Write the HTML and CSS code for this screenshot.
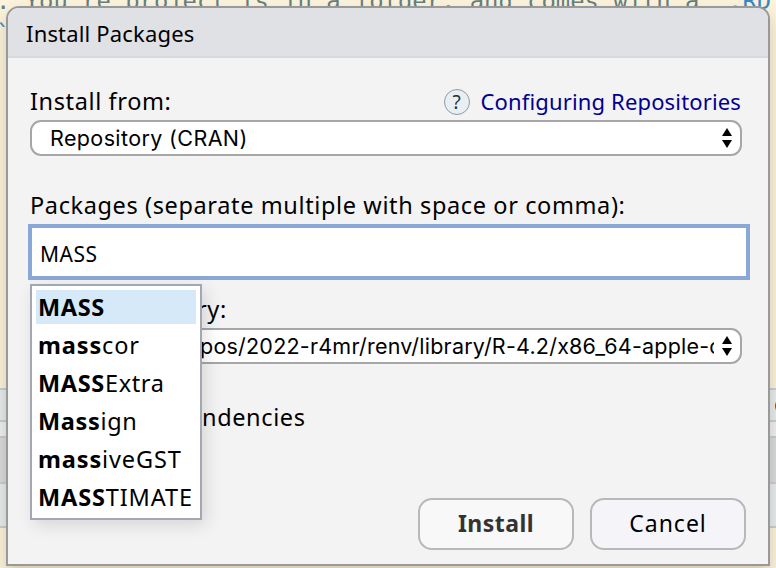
FILE: index.html
```html
<!DOCTYPE html>
<html lang="en">
<head>
<meta charset="utf-8">
<title>Install Packages</title>
<link rel="stylesheet" href="styles.css">
</head>
<body>
<div class="workspace">
  <div class="editor"><pre class="code">. You're project is in a folder, and comes with a <b>`.RD</b></pre><pre class="code tick">`</pre></div>
  <div class="bar bar-status"><span>C</span></div>
  <div class="bar bar-gap"></div>
  <div class="bar bar-tabs"></div>
  <div class="bar bar-tools"></div>
  <div class="console"></div>
</div>
<section class="dialog">
  <header class="title"><span class="t-title">Install Packages</span></header>
  <div class="content">
    <div class="row">
      <label class="label from-label">Install from:</label>
      <a class="help"><svg width="28" height="28" viewBox="0 0 28 28"><circle cx="14" cy="14" r="12.5" fill="#e9eef2" stroke="#8d9ba5"/></svg><span class="mark">?</span><span class="link">Configuring Repositories</span></a>
    </div>
    <div class="select"><span>Repository (CRAN)</span>
      <svg class="arrows" width="12" height="20" viewBox="0 0 12 20"><path d="M6 0L11 8H1zM1 12H11L6 20z"/></svg></div>
    <label class="label packages-label">Packages (separate multiple with space or comma):</label>
    <div class="field">
      <div class="input">MASS</div>
      <ul class="menu">
        <li class="selected"><b>MASS</b></li>
        <li class="wide"><b>mass</b>cor</li>
        <li><b>MASS</b>Extra</li>
        <li><b>Mass</b>ign</li>
        <li class="wide"><b>mass</b>iveGST</li>
        <li class="wide"><b>MASS</b>TIMATE</li>
      </ul>
    </div>
    <label class="label library-label">ry:</label>
    <div class="select library"><span class="path">pos/2022-r4mr/renv/library/R-4.2/x86_64-apple-d</span>
      <svg class="arrows" width="12" height="20" viewBox="0 0 12 20"><path d="M6 0L11 8H1zM1 12H11L6 20z"/></svg></div>
    <label class="label deps">ndencies</label>
    <div class="buttons">
      <button class="primary">Install</button>
      <button class="cancel">Cancel</button>
    </div>
  </div>
</section>
</body>
</html>
```
FILE: styles.css
```css
* { box-sizing: border-box; }
body { margin: 0; width: 776px; height: 568px; overflow: hidden; font: 22px/30px "Noto Sans", sans-serif; color: #000; }
.workspace { height: 568px; display: flex; flex-direction: column; background: #fbf3dc; }
.editor { height: 388px; overflow: hidden; }
.code { margin: -13px 0 0 -4px; font: 23.85px/28px "DejaVu Sans Mono", monospace; color: #667f83; white-space: pre; }
.code b { color: #3489ca; font-weight: 400; }
.tick { margin: 4px 0 0 -4px; color: #3489ca; }
.bar { border-top: 2px solid #c9ccd0; flex: none; }
.bar-status { height: 32px; background: #e6ebee; text-align: right; overflow: hidden; line-height: 31px; }
.bar-status span { margin-right: -12px; }
.bar-gap { height: 16px; background: #edf0f2; }
.bar-tabs { height: 46px; background: #d8dadc; }
.bar-tools { height: 46px; background: #e6ecef; border-bottom: 2px solid #c9ccd0; }
.console { flex: 1; background: #fbf3dc; }

.dialog { position: absolute; left: 6px; top: 6px; width: 764px; height: 560px; border: 2px solid #999; border-radius: 13px 13px 0 0; background: #f3f3f3; box-shadow: 0 8px 16px 0 rgba(80, 70, 40, .25); }
.title { height: 50px; padding: 10px 18px; border-bottom: 2px solid #d6d9de; border-radius: 11px 11px 0 0; background: #e0e1e5; line-height: 30px; letter-spacing: .17px; white-space: nowrap; }
.content { padding: 28px 20px 0 22px; white-space: nowrap; }
.label { font-size: 23.5px; letter-spacing: .62px; line-height: 28px; }
.row { display: flex; justify-content: space-between; width: 712px; height: 34px; }
.from-label { padding-top: 1px; }
.help { position: relative; display: flex; gap: 10px; color: #00008f; padding: 2px 1px 0 0; }
.link { line-height: 26px; letter-spacing: .15px; }
.help svg { flex: none; }
.mark { position: absolute; left: 0; top: 1px; width: 28px; text-align: center; font-size: 19px; line-height: 30px; color: #222e38; }
.select { display: flex; align-items: center; width: 712px; height: 36px; padding: 0 7px 0 18px; border: 2px solid #a6a6a6; border-radius: 11px; background: #fff; font: 21.5px/32px Inter, sans-serif; letter-spacing: .38px; }
.arrows { margin-left: auto; flex: none; }
.packages-label { display: block; margin-top: 35px; height: 33px; }
.field { position: relative; margin-left: -2px; width: 722px; }
.input { height: 56px; padding: 10px 8px; border: 4px solid #89a8d8; background: #fff; line-height: 32px; font-size: 21px; letter-spacing: .5px; }
.menu { position: absolute; left: 2px; top: 60px; width: 172px; height: 236px; margin: 0; padding: 4px; list-style: none; border: 2px solid #a3a6b3; background: #fff; box-shadow: 4px 5px 16px rgba(0, 0, 0, .12); font-size: 23.5px; letter-spacing: .65px; }
.menu li { height: 34px; margin-bottom: 4px; padding-left: 2px; line-height: 34px; }
.menu .wide { letter-spacing: .87px; }
.menu .selected { background: #d6e9f8; }
.library-label { display: block; height: 48px; padding: 15px 0 0 167px; }
.library { padding-left: 0; }
.path { width: 682px; padding-left: 168px; overflow: hidden; letter-spacing: .22px; }
.deps { display: block; margin-top: 39px; height: 32px; padding-left: 172px; }
.buttons { display: flex; justify-content: flex-end; gap: 16px; margin: 63px 2px 0 0; }
button { width: 156px; height: 52px; padding: 0 0 2px; border: 2px solid #b8b8b8; border-radius: 14px; background: #f5f5f9; font: 23px/40px "Noto Sans", sans-serif; color: #000; }
.primary { background: #f8f8f8; color: #333; font-weight: 700; letter-spacing: .45px; }
.cancel { letter-spacing: 1px; }
```
